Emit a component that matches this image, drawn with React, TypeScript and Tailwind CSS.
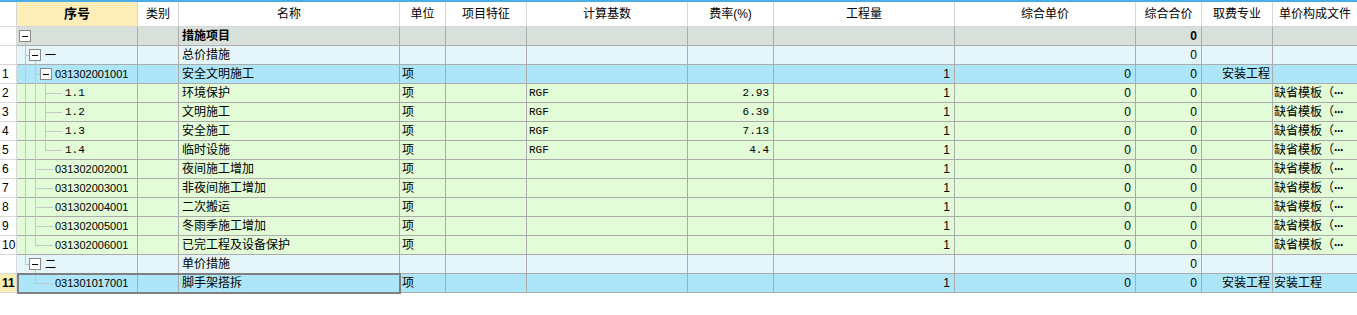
import React from 'react';

const COLS = 'grid grid-cols-[17px_121px_41px_221px_46px_81px_161px_86px_181px_181px_66px_71px_84px]';

type Line = [number, 'full' | 'top' | 'bottom'];

interface Row {
  no: string;
  bg: string;
  code: string;
  codeMono?: boolean;
  name: string;
  unit?: string;
  base?: string;
  rate?: string;
  qty?: string;
  price?: string;
  total: string;
  major?: string;
  file?: string;
  lines: Line[];
  box?: number;
  link?: [number, number];
  textX: number;
  bold?: boolean;
  active?: boolean;
}

const ROOT = 'bg-[#d8e0dc]';
const GROUP = 'bg-[#e4f6fa]';
const ITEM = 'bg-[#ade6f9]';
const SUB = 'bg-[#e1fcd6]';

const TPL = '缺省模板（';

const rows: Row[] = [
  { no: '', bg: ROOT, code: '', name: '措施项目', total: '0', lines: [[8, 'bottom']], box: 2, textX: 28, bold: true },
  { no: '', bg: GROUP, code: '一', name: '总价措施', total: '0', lines: [[8, 'full'], [18, 'bottom']], box: 12, link: [8, 12], textX: 28 },
  { no: '1', bg: ITEM, code: '031302001001', name: '安全文明施工', unit: '项', qty: '1', price: '0', total: '0', major: '安装工程', lines: [[8, 'full'], [18, 'full'], [28, 'bottom']], box: 23, link: [18, 23], textX: 38 },
  { no: '2', bg: SUB, code: '1.1', codeMono: true, name: '环境保护', unit: '项', base: 'RGF', rate: '2.93', qty: '1', price: '0', total: '0', file: TPL, lines: [[8, 'full'], [18, 'full'], [28, 'full']], link: [28, 45], textX: 48 },
  { no: '3', bg: SUB, code: '1.2', codeMono: true, name: '文明施工', unit: '项', base: 'RGF', rate: '6.39', qty: '1', price: '0', total: '0', file: TPL, lines: [[8, 'full'], [18, 'full'], [28, 'full']], link: [28, 45], textX: 48 },
  { no: '4', bg: SUB, code: '1.3', codeMono: true, name: '安全施工', unit: '项', base: 'RGF', rate: '7.13', qty: '1', price: '0', total: '0', file: TPL, lines: [[8, 'full'], [18, 'full'], [28, 'full']], link: [28, 45], textX: 48 },
  { no: '5', bg: SUB, code: '1.4', codeMono: true, name: '临时设施', unit: '项', base: 'RGF', rate: '4.4', qty: '1', price: '0', total: '0', file: TPL, lines: [[8, 'full'], [18, 'full'], [28, 'top']], link: [28, 45], textX: 48 },
  { no: '6', bg: SUB, code: '031302002001', name: '夜间施工增加', unit: '项', qty: '1', price: '0', total: '0', file: TPL, lines: [[8, 'full'], [18, 'full']], link: [18, 36], textX: 38 },
  { no: '7', bg: SUB, code: '031302003001', name: '非夜间施工增加', unit: '项', qty: '1', price: '0', total: '0', file: TPL, lines: [[8, 'full'], [18, 'full']], link: [18, 36], textX: 38 },
  { no: '8', bg: SUB, code: '031302004001', name: '二次搬运', unit: '项', qty: '1', price: '0', total: '0', file: TPL, lines: [[8, 'full'], [18, 'full']], link: [18, 36], textX: 38 },
  { no: '9', bg: SUB, code: '031302005001', name: '冬雨季施工增加', unit: '项', qty: '1', price: '0', total: '0', file: TPL, lines: [[8, 'full'], [18, 'full']], link: [18, 36], textX: 38 },
  { no: '10', bg: SUB, code: '031302006001', name: '已完工程及设备保护', unit: '项', qty: '1', price: '0', total: '0', file: TPL, lines: [[8, 'full'], [18, 'top']], link: [18, 36], textX: 38 },
  { no: '', bg: GROUP, code: '二', name: '单价措施', total: '0', lines: [[8, 'top'], [18, 'bottom']], box: 12, link: [8, 12], textX: 28 },
  { no: '11', bg: ITEM, code: '031301017001', name: '脚手架搭拆', unit: '项', qty: '1', price: '0', total: '0', major: '安装工程', file: '安装工程', lines: [[18, 'top']], link: [18, 36], textX: 38, active: true },
];

const headers = ['序号', '类别', '名称', '单位', '项目特征', '计算基数', '费率(%)', '工程量', '综合单价', '综合合价', '取费专业', '单价构成文件'];

const cjk = "font-['Liberation_Sans','Noto_Sans_CJK_SC',sans-serif]";
const mono = "font-['Liberation_Mono','Noto_Sans_CJK_SC',monospace] text-[11px]";

const Cell: React.FC<{ className?: string; children?: React.ReactNode; last?: boolean }> = ({ className = '', children, last }) => (
  <div className={`h-[19px] border-b border-[#ababab] ${last ? '' : 'border-r'} flex items-center overflow-hidden whitespace-nowrap ${className}`}>
    {children}
  </div>
);

const TreeCell: React.FC<{ row: Row }> = ({ row }) => (
  <div
    className={`relative h-[19px] border-r border-b border-[#ababab] flex items-center whitespace-nowrap ${row.bg}`}
    style={{ paddingLeft: row.textX }}
  >
    {row.lines.map(([x, kind], i) => (
      <span
        key={i}
        className={`absolute w-px bg-[#c6c6c6] ${kind === 'full' ? 'top-0 -bottom-px' : kind === 'top' ? 'top-0 h-[9px]' : 'top-[9px] -bottom-px'}`}
        style={{ left: x }}
      />
    ))}
    {row.link && (
      <span className="absolute top-[9px] h-px bg-[#c6c6c6]" style={{ left: row.link[0], width: row.link[1] - row.link[0] }} />
    )}
    {row.box !== undefined && (
      <span
        className="absolute top-[3px] w-[12px] h-[12px] border border-[#8a8a8a] bg-white flex items-center justify-center"
        style={{ left: row.box }}
      >
        <span className="w-[6px] h-px bg-black" />
      </span>
    )}
    <span className={row.codeMono ? mono : `${cjk} text-[11px]`}>{row.code}</span>
  </div>
);

export default function App() {
  return (
    <div className={`relative w-[1357px] h-[315px] bg-white text-black text-[12px] ${cjk}`}>
      <div className={`${COLS} border-t-2 border-[#4aaee6]`}>
        <div className="h-[25px] border-r border-b border-[#d6d6d6] bg-white" />
        {headers.map((h, i) => (
          <div
            key={h}
            className={`h-[25px] border-b border-[#d6d6d6] ${i < headers.length - 1 ? 'border-r' : ''} flex items-center justify-center ${i === 0 ? 'bg-[#fdedb6] font-bold text-[13px]' : 'bg-white'}`}
          >
            {h}
          </div>
        ))}
      </div>

      {rows.map((r, idx) => (
        <div key={idx} className={COLS}>
          <div
            className={`h-[19px] border-r border-b border-[#d8d8d8] flex items-center pl-[2px] ${r.active ? 'bg-[#fdedb6] font-bold' : 'bg-white'}`}
          >
            {r.no}
          </div>
          <TreeCell row={r} />
          <Cell className={r.bg} />
          <Cell className={`${r.bg} pl-[3px] ${r.bold ? 'font-bold' : ''}`}>{r.name}</Cell>
          <Cell className={`${r.bg} pl-[2px]`}>{r.unit}</Cell>
          <Cell className={r.bg} />
          <Cell className={`${r.bg} pl-[2px] ${mono}`}>{r.base}</Cell>
          <Cell className={`${r.bg} justify-end pr-[4px] ${mono}`}>{r.rate}</Cell>
          <Cell className={`${r.bg} justify-end pr-[4px]`}>{r.qty}</Cell>
          <Cell className={`${r.bg} justify-end pr-[4px]`}>{r.price}</Cell>
          <Cell className={`${r.bg} justify-end pr-[4px] ${r.bold ? 'font-bold' : ''}`}>{r.total}</Cell>
          <Cell className={`${r.bg} justify-end pr-[2px]`}>{r.major}</Cell>
          <Cell last className={`${r.bg} pl-[1px]`}>
            {r.file === TPL ? (
              <>
                {TPL}
                <span className="font-bold tracking-[-1px]">···</span>
              </>
            ) : (
              r.file
            )}
          </Cell>
        </div>
      ))}

      <div className="absolute left-[17px] top-[273px] w-[384px] h-[21px] border-2 border-[#7f7f7f] pointer-events-none" />
    </div>
  );
}
